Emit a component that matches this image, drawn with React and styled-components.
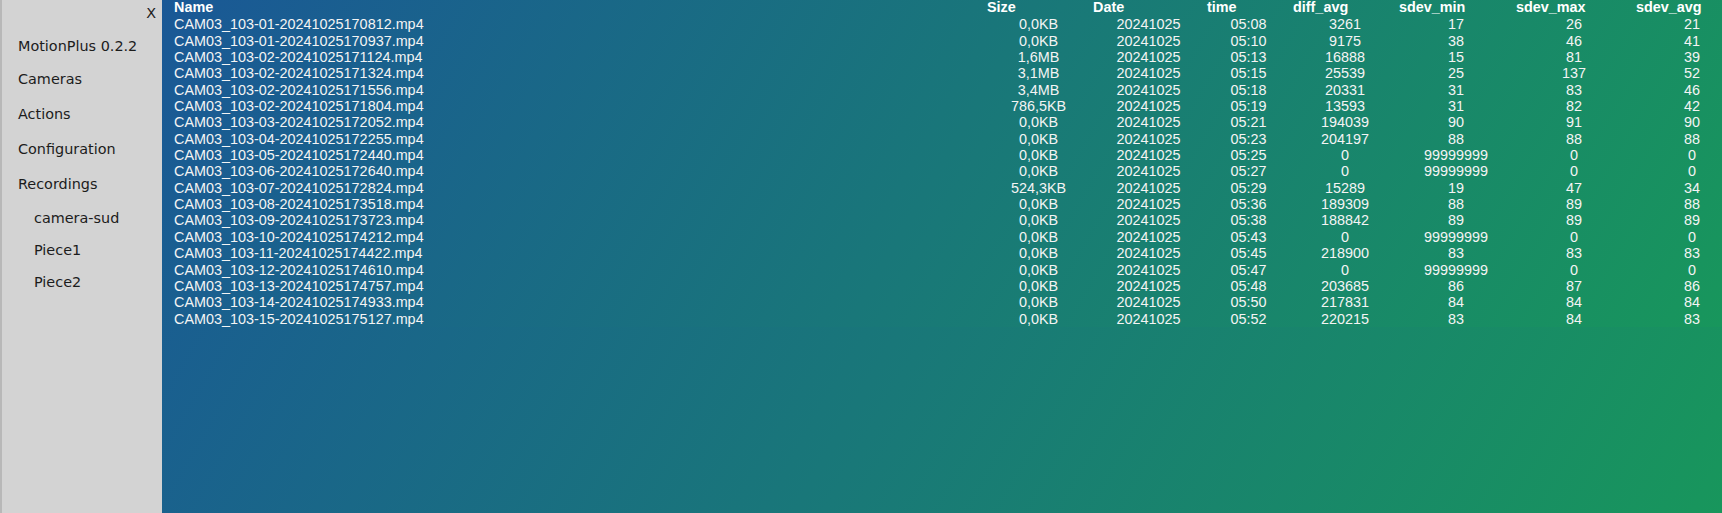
import React from "react"
import styled, { createGlobalStyle } from "styled-components"

const GlobalStyle = createGlobalStyle`
  html, body {
    margin: 0;
    padding: 0;
    height: 100%;
    overflow: hidden;
  }
  #root {
    height: 100%;
  }
`

const columns = [
  { key: "name", title: "Name", width: 822, headPad: 12, align: "left" },
  { key: "size", title: "Size", width: 109, headPad: 3, align: "center" },
  { key: "date", title: "Date", width: 111, headPad: 0, align: "center" },
  { key: "time", title: "time", width: 89, headPad: 3, align: "center" },
  { key: "diff", title: "diff_avg", width: 104, headPad: 0, align: "center" },
  { key: "smin", title: "sdev_min", width: 118, headPad: 2, align: "center" },
  { key: "smax", title: "sdev_max", width: 118, headPad: 1, align: "center" },
  { key: "savg", title: "sdev_avg", width: 118, headPad: 3, align: "center" },
]

const rows = [
  ["CAM03_103-01-20241025170812.mp4", "0,0KB", "20241025", "05:08", "3261", "17", "26", "21"],
  ["CAM03_103-01-20241025170937.mp4", "0,0KB", "20241025", "05:10", "9175", "38", "46", "41"],
  ["CAM03_103-02-20241025171124.mp4", "1,6MB", "20241025", "05:13", "16888", "15", "81", "39"],
  ["CAM03_103-02-20241025171324.mp4", "3,1MB", "20241025", "05:15", "25539", "25", "137", "52"],
  ["CAM03_103-02-20241025171556.mp4", "3,4MB", "20241025", "05:18", "20331", "31", "83", "46"],
  ["CAM03_103-02-20241025171804.mp4", "786,5KB", "20241025", "05:19", "13593", "31", "82", "42"],
  ["CAM03_103-03-20241025172052.mp4", "0,0KB", "20241025", "05:21", "194039", "90", "91", "90"],
  ["CAM03_103-04-20241025172255.mp4", "0,0KB", "20241025", "05:23", "204197", "88", "88", "88"],
  ["CAM03_103-05-20241025172440.mp4", "0,0KB", "20241025", "05:25", "0", "99999999", "0", "0"],
  ["CAM03_103-06-20241025172640.mp4", "0,0KB", "20241025", "05:27", "0", "99999999", "0", "0"],
  ["CAM03_103-07-20241025172824.mp4", "524,3KB", "20241025", "05:29", "15289", "19", "47", "34"],
  ["CAM03_103-08-20241025173518.mp4", "0,0KB", "20241025", "05:36", "189309", "88", "89", "88"],
  ["CAM03_103-09-20241025173723.mp4", "0,0KB", "20241025", "05:38", "188842", "89", "89", "89"],
  ["CAM03_103-10-20241025174212.mp4", "0,0KB", "20241025", "05:43", "0", "99999999", "0", "0"],
  ["CAM03_103-11-20241025174422.mp4", "0,0KB", "20241025", "05:45", "218900", "83", "83", "83"],
  ["CAM03_103-12-20241025174610.mp4", "0,0KB", "20241025", "05:47", "0", "99999999", "0", "0"],
  ["CAM03_103-13-20241025174757.mp4", "0,0KB", "20241025", "05:48", "203685", "86", "87", "86"],
  ["CAM03_103-14-20241025174933.mp4", "0,0KB", "20241025", "05:50", "217831", "84", "84", "84"],
  ["CAM03_103-15-20241025175127.mp4", "0,0KB", "20241025", "05:52", "220215", "83", "84", "83"],
]

const Layout = styled.div`
  display: flex;
  height: 100%;
  min-height: 513px;
`

const Sidebar = styled.aside`
  flex: 0 0 160px;
  background: #d3d3d3;
  border-left: 2px solid #b8b8b8;
  color: #1c1c1c;
  font-family: "DejaVu Sans", sans-serif;
  font-size: 14.4px;
  display: flex;
  flex-direction: column;
`

const CloseRow = styled.div`
  height: 30.5px;
  padding: 5px 6px 0 0;
  box-sizing: border-box;
  text-align: right;
  line-height: 16.8px;
`

const Close = styled.span`
  cursor: pointer;
`

const Title = styled.div`
  height: 31.5px;
  line-height: 31.5px;
  padding-left: 16px;
`

const NavItem = styled.div`
  height: ${(p) => (p.$sub ? "32px" : "35px")};
  line-height: ${(p) => (p.$sub ? "32px" : "35px")};
  padding-left: ${(p) => (p.$sub ? "32px" : "16px")};
  white-space: nowrap;
  cursor: pointer;
`

const Main = styled.main`
  flex: 1;
  min-width: 0;
  overflow: hidden;
  background: linear-gradient(120deg, #1a5896 0%, #18965c 100%);
`

const TableWrap = styled.div`
  width: 100%;
  overflow: hidden;
  background: linear-gradient(120deg, #1a5896 0%, #18965c 100%);
`

const Grid = styled.div`
  display: grid;
  grid-template-columns: ${(p) => p.$cols};
  width: max-content;
  font-family: "Liberation Sans", Arial, sans-serif;
  font-size: 14.4px;
  line-height: 16.35px;
  color: #f4f4f4;
`

const HeadCell = styled.div`
  font-weight: bold;
  color: #fff;
  padding-left: ${(p) => p.$pad}px;
  margin-top: -1px;
  margin-bottom: 1px;
  white-space: nowrap;
`

const Cell = styled.div`
  text-align: ${(p) => p.$align};
  padding-left: ${(p) => (p.$align === "left" ? "12px" : "0")};
  white-space: nowrap;
`

const subs = ["camera-sud", "Piece1", "Piece2"]

export default function App() {
  const cols = columns.map((c) => `${c.width}px`).join(" ")
  return (
    <>
      <GlobalStyle />
      <Layout>
        <Sidebar>
          <CloseRow>
            <Close>X</Close>
          </CloseRow>
          <Title>MotionPlus 0.2.2</Title>
          <NavItem>Cameras</NavItem>
          <NavItem>Actions</NavItem>
          <NavItem>Configuration</NavItem>
          <NavItem>Recordings</NavItem>
          {subs.map((s) => (
            <NavItem key={s} $sub>
              {s}
            </NavItem>
          ))}
        </Sidebar>
        <Main>
          <TableWrap>
            <Grid $cols={cols}>
              {columns.map((c) => (
                <HeadCell key={c.key} $pad={c.headPad}>
                  {c.title}
                </HeadCell>
              ))}
              {rows.map((r) =>
                r.map((v, i) => (
                  <Cell key={r[0] + i} $align={columns[i].align}>
                    {v}
                  </Cell>
                ))
              )}
            </Grid>
          </TableWrap>
        </Main>
      </Layout>
    </>
  )
}
